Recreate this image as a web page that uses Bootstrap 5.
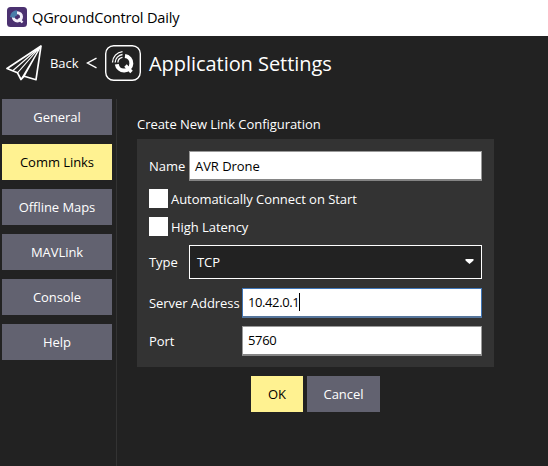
<!DOCTYPE html>
<html lang="en">
<head>
<meta charset="utf-8">
<meta name="viewport" content="width=device-width, initial-scale=1">
<title>QGroundControl Daily</title>
<link href="https://cdn.jsdelivr.net/npm/bootstrap@5.3.0/dist/css/bootstrap.min.css" rel="stylesheet">
<style>
  body { font-family: "Open Sans", "Noto Sans", sans-serif; font-size: 13px; letter-spacing: -.05px; line-height: 18px; background: #222; color: #fff; height: 100vh; overflow: hidden; }
  .window-bar { height: 36px; background: #fff; color: #000; font-size: 14.6px; letter-spacing: -.2px; padding: 0 0 2px 7px; gap: 5px; }
  .window-bar span { line-height: 20px; }
  .tool-bar { height: 63px; padding: 0 0 9px 6px; }
  .tool-bar h1 { font-size: 20px; line-height: 28px; font-weight: 400; margin-left: 8px; padding-top: 2px; }
  .back-text { width: 28px; }
  .side-nav { width: 117px; padding-left: 2px; padding-right: 4px; gap: 9px; border-right: 1px solid #333; }
  .qgc-btn { --bs-btn-bg: #626270; --bs-btn-color: #fff; --bs-btn-border-width: 0; --bs-btn-border-radius: 0; --bs-btn-padding-x: 0; --bs-btn-padding-y: 0; --bs-btn-font-size: 13px; --bs-btn-line-height: 18px; --bs-btn-hover-bg: #fff291; --bs-btn-hover-color: #000; height: 36px; letter-spacing: -.05px; }
  .qgc-btn.primary-action { --bs-btn-bg: #fff291; --bs-btn-color: #000; }
  .ok-btn { width: 52px; }
  .cancel-btn { width: 73px; }
  .editor { width: 357px; margin-left: 20px; padding-top: 16px; }
  .panel { background: #333; height: 228px; margin-top: 6px; padding: 12px 12px 0; }
  .short-label { width: 40px; }
  .long-label { width: 93px; }
  .form-control.qgc-field { height: 30px; border: 1px solid #999; border-bottom: 2px solid #858585; border-radius: 0; padding: 0 5px; font-size: 13px; line-height: 18px; background: #fff; color: #000; }
  .form-control.qgc-field.active-field { border-color: #3f76b8; border-bottom-color: #56769c; letter-spacing: -.4px; padding-bottom: 1px; }
  .form-control.qgc-field.port-field { letter-spacing: -.32px; padding-bottom: 1px; }
  .caret-bar { width: 1px; height: 18px; background: #000; }
  .form-check-input.qgc-check { width: 19px; height: 19px; border: 0; border-radius: 0; background-color: #fff; }
  .check-row { height: 19px; gap: 3px; margin-bottom: 9px; }
  .combo { height: 34px; border: 1px solid #fff; background: #222; padding: 0 7px; }
  .combo svg { margin-bottom: 2px; }
  .type-row { margin-bottom: 9px; }
  .actions { gap: 4px; margin-top: 9px; }
</style>
</head>
<body class="d-flex flex-column">
<header class="window-bar d-flex align-items-center flex-shrink-0">
  <svg width="20" height="20" viewBox="0 0 20 20" aria-hidden="true">
    <rect width="20" height="20" rx="3.500" fill="#4b3170"/>
    <circle cx="10.400" cy="9.800" r="4.100" fill="none" stroke="#f4f0fa" stroke-width="3"/>
    <path d="M3 10A7 7 0 0 1 10 3.200V8.500Q7.700 8.500 7.700 11Z" fill="#4b7da9"/>
    <path d="M11.500 11.500l4 4" stroke="#f4f0fa" stroke-width="2.400"/>
  </svg>
  <span>QGroundControl Daily</span>
</header>
<div class="tool-bar d-flex align-items-center flex-shrink-0">
  <svg width="36" height="36" viewBox="0 0 36 36" fill="none" stroke="#fff" stroke-width="1.700" stroke-linejoin="round" aria-hidden="true">
    <path d="M35 1L1 23.500 11.500 27.800 15 34.500 18.200 31.200 30 34.700Z"/>
    <path d="M35 1L7 25.500M35 1L11.500 27.800M35 1L15 34.500M35 1L18.200 31.200" stroke-width="1.100"/>
  </svg>
  <span class="back-text ms-2">Back</span>
  <svg class="ms-2" width="11" height="12" viewBox="0 0 11 12" fill="none" stroke="#fff" stroke-width="1.400" aria-hidden="true"><path d="M10.500 1.200L1.500 6l9 4.800"/></svg>
  <svg width="36" height="36" viewBox="0 0 36 36" fill="none" stroke="#fff" class="ms-2 flex-shrink-0" aria-hidden="true">
    <rect x=".7" y=".7" width="34.600" height="34.600" rx="8" stroke-width="1.400"/>
    <path d="M20 11A7.300 7.300 0 1 1 11.800 19.200" stroke-width="4"/>
    <path d="M20.500 20.500L26.500 27" stroke-width="3.400"/>
    <path d="M7.500 17.500A11 11 0 0 1 17.500 6.700M10.200 17.500A8.200 8.200 0 0 1 17.500 9.500M12.900 17.500A5.500 5.500 0 0 1 17.500 12.300" stroke-width="1.300"/>
  </svg>
  <h1 class="mb-0">Application Settings</h1>
</div>
<div class="d-flex flex-grow-1">
  <nav class="side-nav d-flex flex-column flex-shrink-0">
    <button class="btn qgc-btn">General</button>
    <button class="btn qgc-btn primary-action">Comm Links</button>
    <button class="btn qgc-btn">Offline Maps</button>
    <button class="btn qgc-btn">MAVLink</button>
    <button class="btn qgc-btn">Console</button>
    <button class="btn qgc-btn">Help</button>
  </nav>
  <main class="editor flex-shrink-0">
    <div>Create New Link Configuration</div>
    <form class="panel">
      <div class="d-flex align-items-center mb-2">
        <label class="short-label flex-shrink-0">Name</label>
        <div class="form-control qgc-field d-flex align-items-center">AVR Drone</div>
      </div>
      <label class="check-row d-flex align-items-center"><input class="form-check-input qgc-check m-0" type="checkbox">Automatically Connect on Start</label>
      <label class="check-row d-flex align-items-center"><input class="form-check-input qgc-check m-0" type="checkbox">High Latency</label>
      <div class="type-row d-flex align-items-center">
        <label class="short-label flex-shrink-0">Type</label>
        <div class="combo d-flex align-items-center justify-content-between flex-grow-1"><span>TCP</span>
          <svg width="9" height="5" viewBox="0 0 9 5" aria-hidden="true"><path d="M.5 0h8v1.500L4.500 5 .5 1.500Z" fill="#fff"/></svg>
        </div>
      </div>
      <div class="d-flex align-items-center mb-2">
        <label class="long-label flex-shrink-0">Server Address</label>
        <div class="form-control qgc-field active-field d-flex align-items-center"><span>10.42.0.1</span><span class="caret-bar"></span></div>
      </div>
      <div class="d-flex align-items-center">
        <label class="long-label flex-shrink-0">Port</label>
        <div class="form-control qgc-field port-field d-flex align-items-center">5760</div>
      </div>
    </form>
    <div class="actions d-flex justify-content-center">
      <button class="btn qgc-btn primary-action ok-btn">OK</button>
      <button class="btn qgc-btn cancel-btn">Cancel</button>
    </div>
  </main>
</div>
<script src="https://cdn.jsdelivr.net/npm/bootstrap@5.3.0/dist/js/bootstrap.bundle.min.js"></script>
</body>
</html>
